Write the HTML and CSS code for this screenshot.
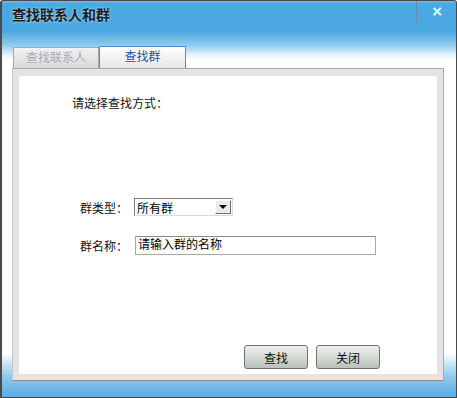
FILE: index.html
```html
<!DOCTYPE html>
<html lang="zh-CN">
<head>
  <meta charset="UTF-8" />
  <title>查找联系人和群</title>
  <link rel="stylesheet" href="styles.css">
</head>
<body>
  <div class="window">
    <div class="titlebar">
      <h1>查找联系人和群</h1>
      <div class="sep"></div>
      <div class="close">×</div>
    </div>
    <div class="tabs">
      <div class="tab">查找联系人</div>
      <div class="tab active">查找群</div>
    </div>
    <div class="panel">
      <div class="inner">
        <p class="hint">请选择查找方式：</p>
        <div class="row first">
          <span class="label">群类型：</span>
          <div class="select">
            <span>所有群</span>
            <span class="drop"><i></i></span>
          </div>
        </div>
        <div class="row">
          <span class="label">群名称：</span>
          <div class="input">请输入群的名称</div>
        </div>
        <div class="actions">
          <button>查找</button>
          <button>关闭</button>
        </div>
      </div>
    </div>
  </div>
</body>
</html>
```

FILE: styles.css
```css
* {
  margin: 0;
  padding: 0;
  box-sizing: border-box;
}
body {
  font-family: "Liberation Sans", "Noto Sans CJK SC", sans-serif;
  font-size: 12px;
  background: #fff;
}
.window {
  width: 457px;
  height: 398px;
  border: 1px solid #4a4a4a;
  border-left-width: 2px;
  border-radius: 3px 3px 0 0;
  background: linear-gradient(to bottom, #6cbaea 0, #4ba8e1 3px, #4aa7e0 30px, #8ecaef 44px, #e6f4fc 54px, #fff 60px, #fff 352px, #cde8f8 362px, #8cc8ee 376px, #58ade5 397px);
  display: flex;
  flex-direction: column;
}
.titlebar {
  height: 29px;
  display: flex;
  align-items: flex-start;
  padding-left: 10px;
}
.titlebar h1 {
  font-size: 14px;
  font-weight: bold;
  line-height: 16px;
  margin-top: 6px;
  color: #1c1c1c;
  text-shadow: 0 0 3px rgba(255, 255, 255, 0.7);
  flex: 1;
}
.sep {
  width: 1px;
  height: 22px;
  background: #6b8ea8;
  margin-right: 14px;
}
.close {
  width: 12px;
  color: #fff;
  font-family: "DejaVu Sans", sans-serif;
  font-size: 14px;
  font-weight: bold;
  line-height: 14px;
  margin-top: 3px;
  margin-right: 13px;
  text-align: center;
}
.tabs {
  display: flex;
  align-items: flex-end;
  margin-top: 16px;
  padding-left: 11px;
  height: 22px;
}
.tab {
  width: 86px;
  height: 21px;
  border: 1px solid #a6a6a6;
  border-bottom: none;
  background: linear-gradient(to bottom, #f2f2f2, #d9d9d9);
  color: #a9a9ba;
  text-align: center;
  line-height: 20px;
  font-size: 12px;
}
.tab.active {
  width: 87px;
  height: 22px;
  border-color: #4b8fcb;
  background: linear-gradient(to bottom, #ffffff, #e6e6e6);
  color: #1456a8;
}
.panel {
  margin-left: 10px;
  width: 432px;
  height: 313px;
  border: 1px solid #a9a9a9;
  border-left-color: #c4c4c4;
  border-bottom-color: #8e8e8e;
  background: #e4e4e4;
  padding: 7px 6px 6px 6px;
}
.inner {
  height: 100%;
  background: #fff;
  display: flex;
  flex-direction: column;
  padding: 20px 57px 5px 53px;
}
.hint {
  line-height: 16px;
  color: #111;
}
.row {
  display: flex;
  align-items: center;
  margin-top: 20px;
}
.row.first {
  margin-top: 86px;
}
.label {
  width: 62px;
  padding-left: 8px;
  color: #111;
}
.select {
  width: 99px;
  height: 18px;
  border: 1px solid;
  border-color: #7b7b7b #dcdcdc #dcdcdc #7b7b7b;
  display: flex;
  align-items: center;
  justify-content: space-between;
  padding-left: 2px;
  color: #000;
}
.drop {
  width: 16px;
  height: 14px;
  margin-right: 1px;
  background: #ecebe6;
  border: 1px solid;
  border-color: #fff #6e6e6e #6e6e6e #fff;
  display: flex;
  align-items: center;
  justify-content: center;
}
.drop i {
  width: 0;
  height: 0;
  border-left: 4px solid transparent;
  border-right: 4px solid transparent;
  border-top: 4px solid #000;
}
.input {
  width: 241px;
  height: 19px;
  margin-left: 1px;
  border: 1px solid #a8a8a8;
  border-top-color: #8a8a8a;
  padding-left: 2px;
  line-height: 17px;
  color: #000;
}
.actions {
  margin-top: auto;
  display: flex;
  justify-content: flex-end;
  gap: 8px;
}
.actions button {
  width: 64px;
  height: 24px;
  border: 1px solid #6f7370;
  border-radius: 3px;
  background: linear-gradient(to bottom, #eef1ee, #d4dad5 50%, #b9c2bb);
  color: #111;
  font-family: "Liberation Sans", "Noto Sans CJK SC", sans-serif;
  font-size: 12px;
}
```
